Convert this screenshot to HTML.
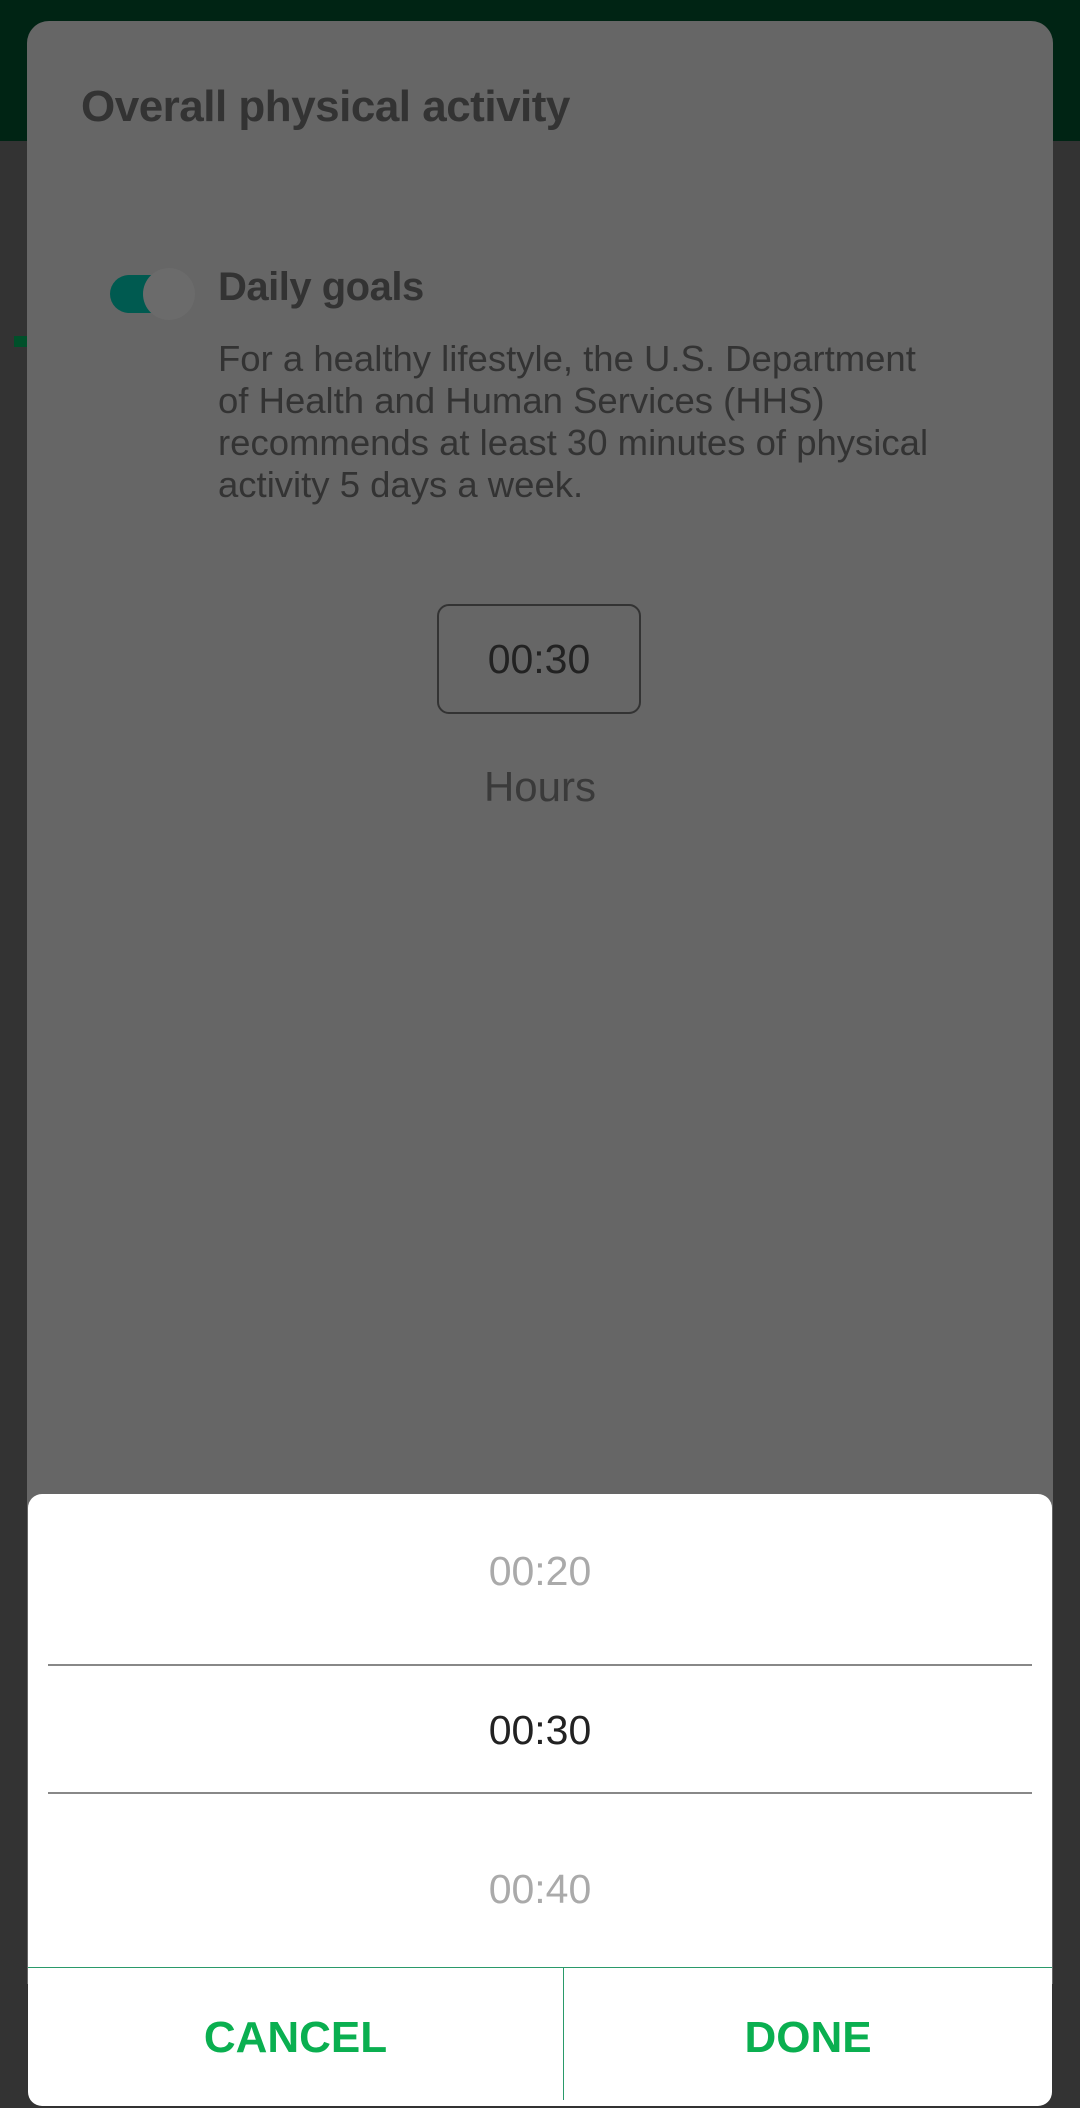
<!DOCTYPE html>
<html><head><meta charset="utf-8"><style>
*{margin:0;padding:0;box-sizing:border-box}
body{width:1080px;height:2108px;background:#333;position:relative;overflow:hidden;font-family:"Liberation Sans",sans-serif}
.abs{position:absolute}
</style></head><body>
<div class="abs" style="left:0;top:0;width:1080px;height:141px;background:#002414"></div>
<div class="abs" style="left:14px;top:336px;width:14px;height:11px;background:#00502a"></div>
<div class="abs" style="left:27px;top:21px;width:1026px;height:1963px;background:#666;border-radius:22px 22px 0 0"></div>
<div class="abs" style="left:81px;top:82px;font-size:44px;font-weight:bold;color:#333;letter-spacing:-0.5px">Overall physical activity</div>
<div class="abs" style="left:110px;top:275px;width:70px;height:38px;background:#005a50;border-radius:19px"></div>
<div class="abs" style="left:143px;top:268px;width:52px;height:52px;background:#6b6b6b;border-radius:50%"></div>
<div class="abs" style="left:218px;top:265px;font-size:40px;font-weight:bold;color:#333;letter-spacing:-0.5px">Daily goals</div>
<div class="abs" style="left:218px;top:338px;width:800px;font-size:36.5px;line-height:42px;color:#333">For a healthy lifestyle, the U.S. Department<br>of Health and Human Services (HHS)<br>recommends at least 30 minutes of physical<br>activity 5 days a week.</div>
<div class="abs" style="left:437px;top:604px;width:204px;height:110px;border:2px solid #333;border-radius:12px;font-size:41px;line-height:106px;text-align:center;color:#222">00:30</div>
<div class="abs" style="left:340px;top:763px;width:400px;text-align:center;font-size:42px;color:#3a3a3a">Hours</div>
<div class="abs" style="left:28px;top:1494px;width:1024px;height:612px;background:#fff;border-radius:14px"></div>
<div class="abs" style="left:28px;top:1548px;width:1024px;text-align:center;font-size:41px;color:#aaa">00:20</div>
<div class="abs" style="left:48px;top:1664px;width:984px;height:2px;background:#888"></div>
<div class="abs" style="left:28px;top:1707px;width:1024px;text-align:center;font-size:41px;color:#222">00:30</div>
<div class="abs" style="left:48px;top:1792px;width:984px;height:2px;background:#888"></div>
<div class="abs" style="left:28px;top:1866px;width:1024px;text-align:center;font-size:41px;color:#aaa">00:40</div>
<div class="abs" style="left:28px;top:1967px;width:1024px;height:1px;background:#2a9a6a"></div>
<div class="abs" style="left:563px;top:1968px;width:1px;height:132px;background:#2a9a6a"></div>
<div class="abs" style="left:28px;top:2013px;width:535px;text-align:center;font-size:44px;font-weight:bold;color:#0aaf50">CANCEL</div>
<div class="abs" style="left:564px;top:2013px;width:488px;text-align:center;font-size:44px;font-weight:bold;color:#0aaf50">DONE</div>
</body></html>
